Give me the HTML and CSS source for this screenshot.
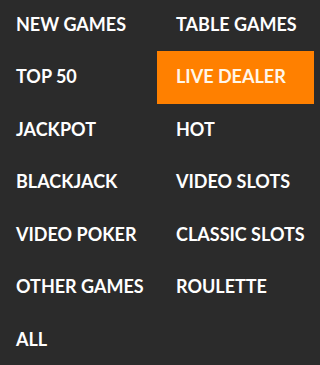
FILE: index.html
```html
<!DOCTYPE html>
<html>
<head>
<meta charset="utf-8">
<link rel="stylesheet" href="styles.css">
</head>
<body>
<nav class="menu">
  <a class="item left">NEW GAMES</a>
  <a class="item right">TABLE GAMES</a>
  <a class="item left">TOP 50</a>
  <a class="item right active">LIVE DEALER</a>
  <a class="item left">JACKPOT</a>
  <a class="item right">HOT</a>
  <a class="item left">BLACKJACK</a>
  <a class="item right">VIDEO SLOTS</a>
  <a class="item left">VIDEO POKER</a>
  <a class="item right">CLASSIC SLOTS</a>
  <a class="item left">OTHER GAMES</a>
  <a class="item right">ROULETTE</a>
  <a class="item left">ALL</a>
</nav>
</body>
</html>
```

FILE: styles.css
```css
html, body {
  margin: 0;
  padding: 0;
  background: #2b2b2b;
  height: 365px;
  overflow: hidden;
}
.menu {
  display: grid;
  grid-template-columns: 157px 157px;
  grid-auto-rows: 52.5px;
  margin-top: -1.5px;
  font-family: "Lato", "Liberation Sans", sans-serif;
  font-weight: 700;
  font-size: 18px;
  color: #ffffff;
}
.item {
  display: block;
  box-sizing: border-box;
  line-height: 20px;
  padding-top: 15px;
  white-space: nowrap;
  color: #ffffff;
}
.left { padding-left: 16px; }
.right { padding-left: 19px; }
.active {
  background: #ff8000;
  color: #fff6ea;
}
```
